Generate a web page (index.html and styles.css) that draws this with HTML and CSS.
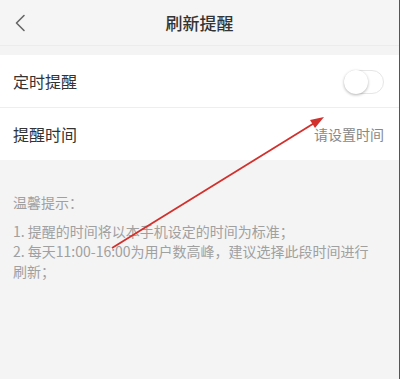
FILE: index.html
```html
<!DOCTYPE html>
<html lang="zh">
<head>
<meta charset="utf-8">
<link rel="stylesheet" href="styles.css">
</head>
<body>
<div class="page">
  <header class="header">
    <span class="back">
      <svg width="12" height="18" viewBox="0 0 12 18"><path d="M10 1.5 L2.5 9 L10 16.5" fill="none" stroke="#666" stroke-width="1.6" stroke-linecap="round" stroke-linejoin="round"/></svg>
    </span>
    <h1 class="title">刷新提醒</h1>
    <span></span>
  </header>
  <section class="list">
    <div class="row">
      <span class="label">定时提醒</span>
      <span class="toggle"><span class="knob"></span></span>
    </div>
    <div class="row row-divided">
      <span class="label">提醒时间</span>
      <span class="value">请设置时间</span>
    </div>
  </section>
  <section class="tips">
    <p class="tips-title">温馨提示：</p>
    <p class="tip">1. 提醒的时间将以本手机设定的时间为标准；</p>
    <p class="tip">2. 每天11:00-16:00为用户数高峰，建议选择此段时间进行刷新；</p>
  </section>
  <svg class="arrow" width="400" height="379" viewBox="0 0 400 379">
    <line x1="112" y1="248" x2="316" y2="122" stroke="#d2302c" stroke-width="1.8"/>
    <polygon points="324,117 310,120 315,128" fill="#d2302c"/>
  </svg>
</div>
</body>
</html>
```
FILE: styles.css
```css
html, body {
  margin: 0;
  padding: 0;
}
body {
  background: #f4f4f4;
  font-family: "Noto Sans CJK SC", "Noto Sans", sans-serif;
  color: #333;
}
.page {
  position: relative;
  width: 399px;
  height: 379px;
  border-right: 1px solid #555;
  overflow: hidden;
}
.header {
  height: 46px;
  display: grid;
  grid-template-columns: 40px 1fr 40px;
  align-items: center;
  background: #f5f5f5;
  border-bottom: 1px solid #ececec;
  box-sizing: border-box;
}
.back {
  display: flex;
  padding-left: 14px;
  padding-top: 1px;
}
.title {
  margin: 0;
  text-align: center;
  font-size: 17px;
  font-weight: 500;
  color: #333;
}
.list {
  margin-top: 9px;
  background: #fff;
}
.row {
  height: 52px;
  display: flex;
  align-items: center;
  justify-content: space-between;
  padding: 0 15px 0 13px;
  box-sizing: border-box;
}
.row-divided {
  border-top: 1px solid #eeeeee;
  height: 53px;
}
.label {
  font-size: 16px;
  color: #333;
}
.value {
  font-size: 14px;
  color: #888;
}
.toggle {
  width: 40px;
  height: 24px;
  border-radius: 12px;
  border: 1px solid #e6e6e6;
  box-sizing: border-box;
  background: #fff;
  position: relative;
  margin-top: 2px;
}
.knob {
  position: absolute;
  left: -1px;
  top: -1px;
  width: 24px;
  height: 24px;
  border-radius: 50%;
  background: #fff;
  box-shadow: 0 1px 3px rgba(0,0,0,0.3);
}
.tips {
  padding: 32px 20px 0 13px;
  color: #a0a0a0;
  font-size: 14px;
}
.tips p {
  margin: 0;
  line-height: 20px;
}
.tips .tips-title {
  margin-bottom: 9px;
}
.arrow {
  position: absolute;
  left: 0;
  top: 0;
  pointer-events: none;
}
```
